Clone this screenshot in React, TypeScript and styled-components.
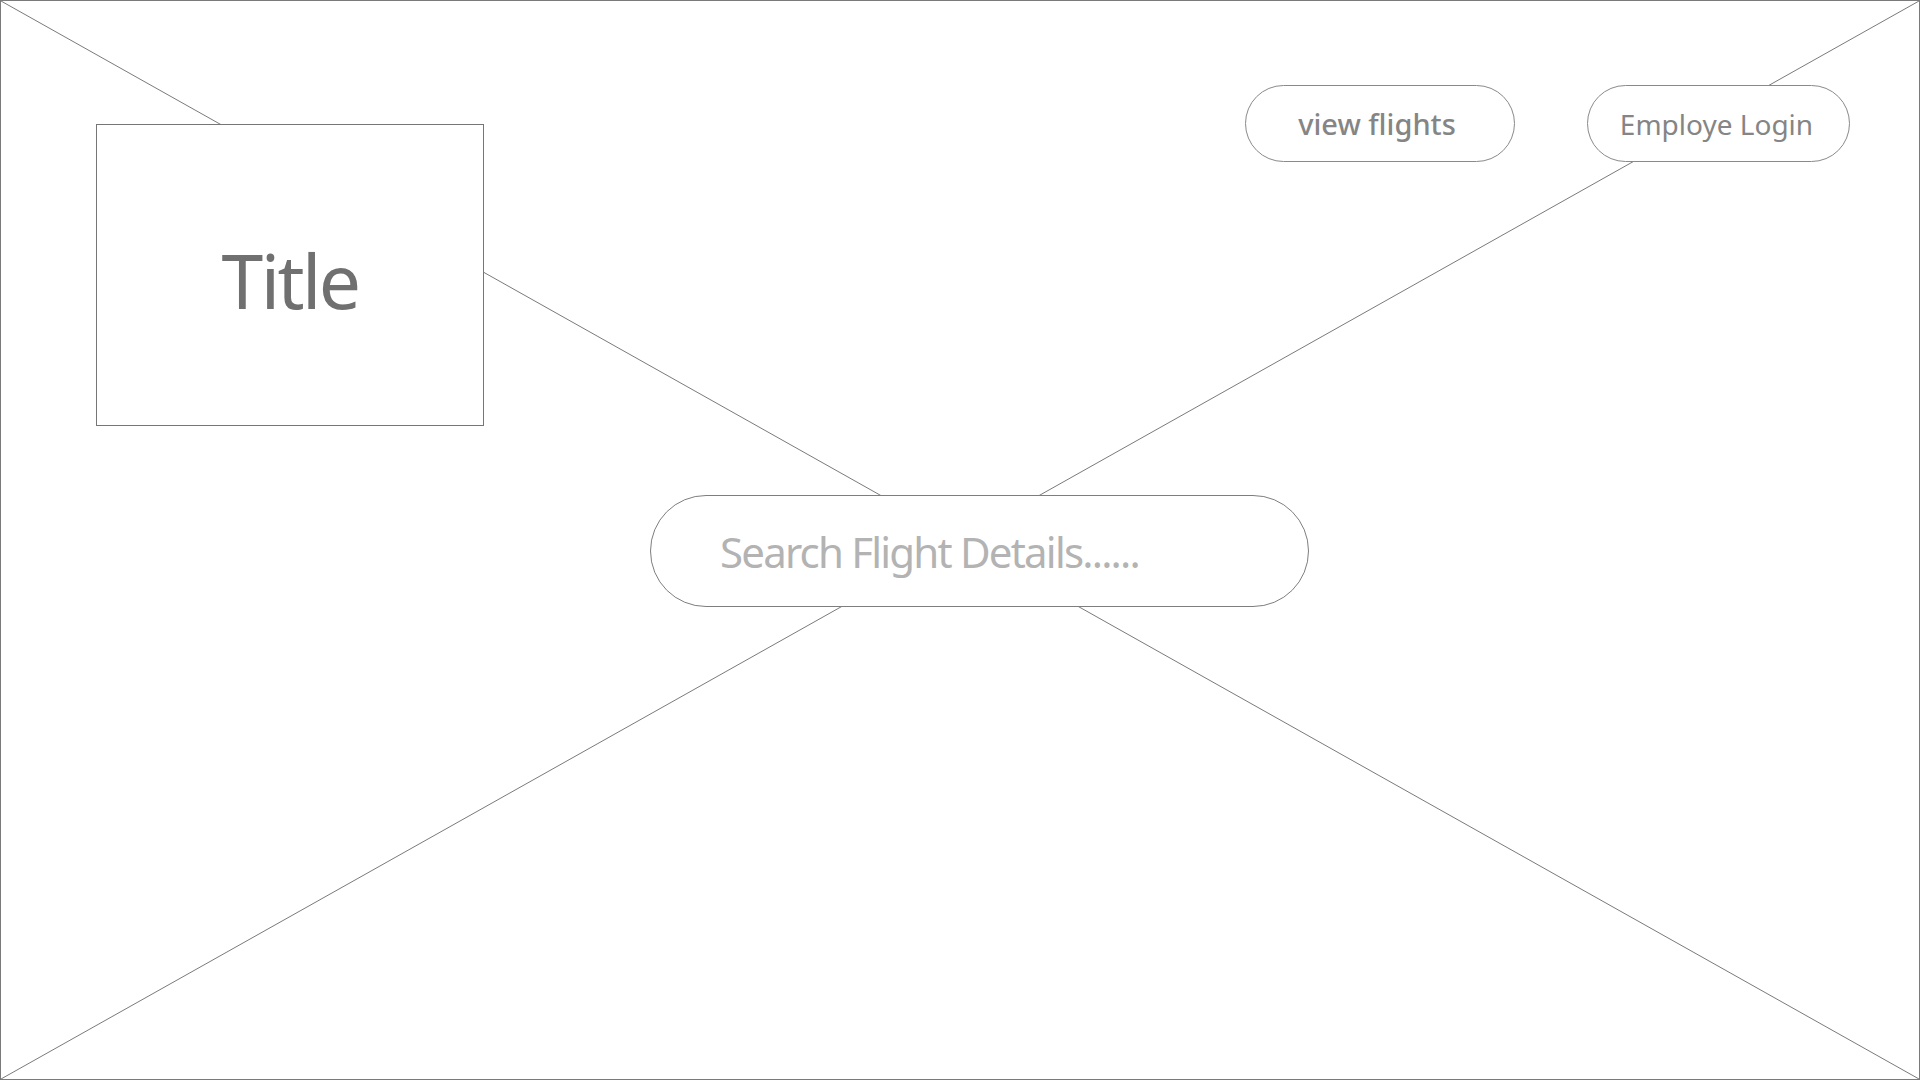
import React from "react";
import styled, { createGlobalStyle } from "styled-components";

const Global = createGlobalStyle`
  html, body { margin: 0; padding: 0; background: #ffffff; }
  * { box-sizing: border-box; }
  body { font-family: "Noto Sans", "Open Sans", sans-serif; }
`;

const Page = styled.div`
  position: relative;
  width: 1920px;
  height: 1080px;
  border: 1px solid #7a7a7a;
  overflow: hidden;
  background: #ffffff;
`;

const Cross = styled.svg`
  position: absolute;
  inset: 0;
  width: 100%;
  height: 100%;
  z-index: 0;
`;

const Content = styled.div`
  position: relative;
  z-index: 1;
  display: flex;
  flex-direction: column;
`;

const TopRow = styled.div`
  display: flex;
  align-items: flex-start;
  padding: 84px 69px 0 95px;
`;

const TitleBox = styled.div`
  width: 388px;
  height: 302px;
  margin-top: 39px;
  border: 1.5px solid #767676;
  background: #ffffff;
  display: flex;
  align-items: center;
  justify-content: center;
  padding-top: 10px;
`;

const TitleText = styled.h1`
  margin: 0;
  font-size: 75px;
  font-weight: 400;
  color: #707070;
  line-height: 1;
  letter-spacing: -2.6px;
`;

const Nav = styled.nav`
  margin-left: auto;
  display: flex;
  gap: 72px;
`;

const PillButton = styled.button<{ $w: number; $size: number; $weight: number; $shift: number }>`
  width: ${(p) => p.$w}px;
  height: 77px;
  border: 1px solid #8a8a8a;
  border-radius: 39px;
  background: #ffffff;
  color: #858585;
  font-family: "Noto Sans", "Open Sans", sans-serif;
  font-size: ${(p) => p.$size}px;
  font-weight: ${(p) => p.$weight};
  letter-spacing: 0;
  display: flex;
  align-items: center;
  justify-content: center;
  padding: 0 ${(p) => p.$shift}px 0 0;
  cursor: pointer;
`;

const SearchRow = styled.div`
  display: flex;
  padding-left: 649px;
  margin-top: 69px;
`;

const SearchField = styled.input`
  width: 659px;
  height: 112px;
  border: 1px solid #7e7e7e;
  border-radius: 56px;
  background: #ffffff;
  padding: 0 0 0 69px;
  font-family: "Noto Sans", "Open Sans", sans-serif;
  font-size: 42px;
  color: #b3b3b3;
  letter-spacing: -1.8px;
  outline: none;
  &::placeholder {
    color: #b3b3b3;
    opacity: 1;
  }
`;

export default function App() {
  return (
    <>
      <Global />
      <Page>
        <Cross viewBox="0 0 1918 1078" preserveAspectRatio="none">
          <line x1="0" y1="0" x2="1918" y2="1078" stroke="#7a7a7a" strokeWidth="1" />
          <line x1="1918" y1="0" x2="0" y2="1078" stroke="#7a7a7a" strokeWidth="1" />
        </Cross>
        <Content>
          <TopRow>
            <TitleBox>
              <TitleText>Title</TitleText>
            </TitleBox>
            <Nav>
              <PillButton $w={270} $size={29} $weight={500} $shift={6}>view flights</PillButton>
              <PillButton $w={263} $size={28} $weight={400} $shift={4}>Employe Login</PillButton>
            </Nav>
          </TopRow>
          <SearchRow>
            <SearchField placeholder="Search Flight Details......" />
          </SearchRow>
        </Content>
      </Page>
    </>
  );
}
